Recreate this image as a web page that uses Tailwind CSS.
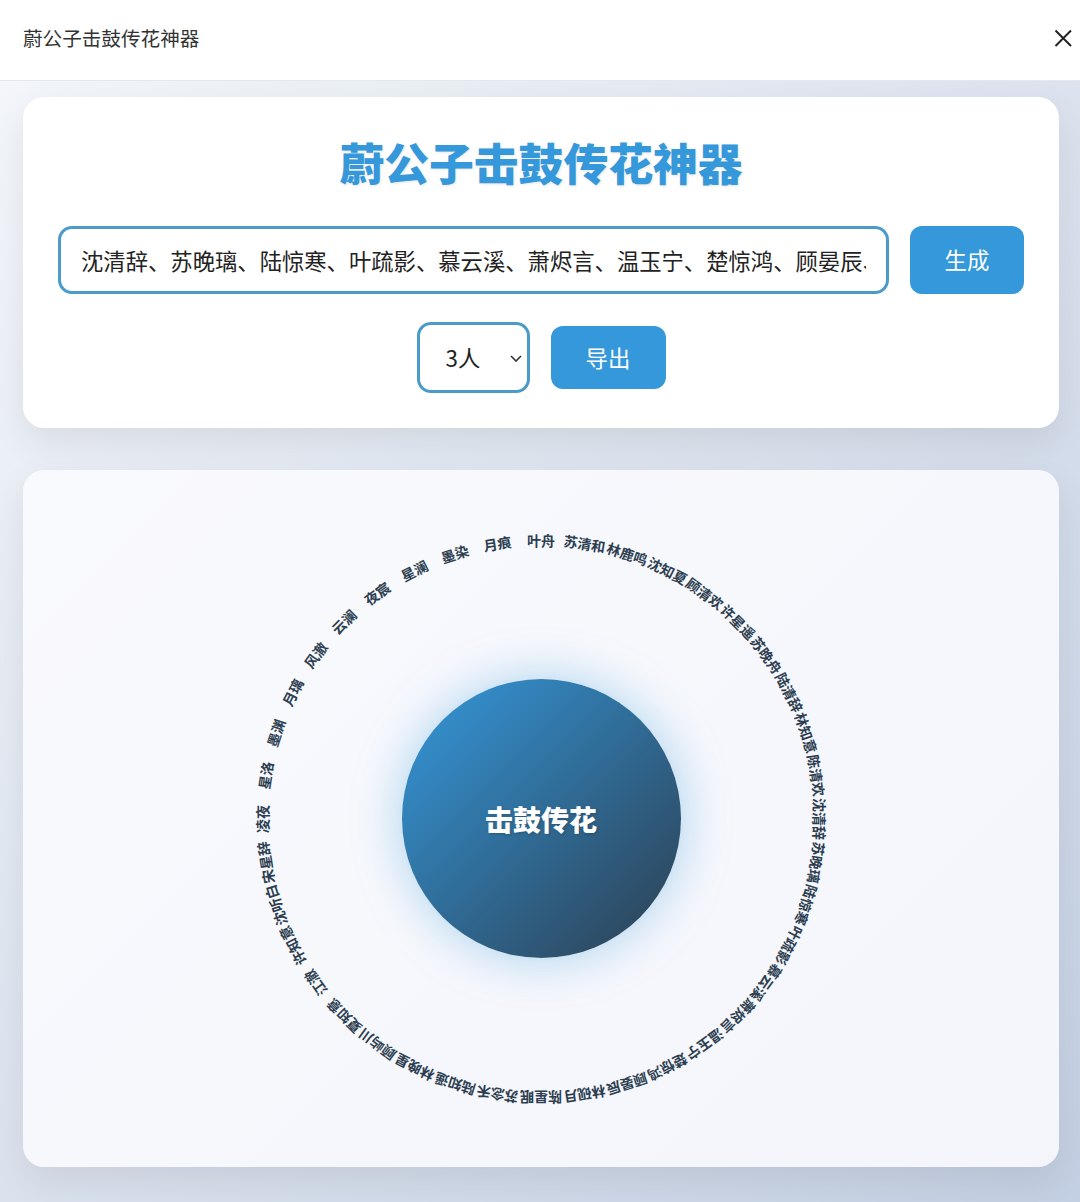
<!DOCTYPE html>
<html lang="zh-CN">
<head>
  <meta charset="UTF-8">
  <meta name="viewport" content="width=device-width, initial-scale=1.0">
  <title>蔚公子击鼓传花神器</title>
  <script src="https://cdn.jsdelivr.net/npm/@tailwindcss/browser@4"></script>
</head>
<body class="h-[1202px] overflow-hidden flex flex-col bg-linear-[135deg,#f5f7fb,#c3cfe2] text-[#333] font-['Noto_Sans_CJK_SC','Noto_Sans',sans-serif]">
  <!-- Header -->
  <header class="h-[81px] shrink-0 bg-white border-b border-[#e4e7ec] flex items-center justify-between pl-[23px] pr-[8px]">
    <h1 class="text-[19.6px] leading-none font-normal text-[#333] -mt-1">蔚公子击鼓传花神器</h1>
    <button class="w-[18px] h-[18px] -mt-1">
      <svg viewBox="0 0 18 18" class="w-[18px] h-[18px]" fill="none" stroke="#222" stroke-width="2"><path d="M1.5 1.5L17 17M17 1.5L1.5 17"/></svg>
    </button>
  </header>

  <main class="flex-1 flex flex-col gap-[42px] pl-[23px] pr-[21px] pt-[16px] pb-[35px] min-h-0">
    <!-- Controls -->
    <section class="shrink-0 h-[331px] bg-white rounded-[21px] shadow-[0_14px_36px_rgba(0,0,0,0.08)] pt-[33px] px-[35px]">
      <h2 class="h-[64px] leading-[64px] text-center text-[44.8px] font-black text-[#3498db] [text-shadow:1px_1px_3px_rgba(0,0,0,0.1)]">蔚公子击鼓传花神器</h2>
      <div class="flex gap-[21px] mt-[32px]">
        <input type="text" class="flex-1 min-w-0 h-[68px] border-[3px] border-[#4a9bc9] rounded-[14px] px-[20px] text-[22.34px] text-[#222] outline-none bg-white" value="沈清辞、苏晚璃、陆惊寒、叶疏影、慕云溪、萧烬言、温玉宁、楚惊鸿、顾晏辰、林砚月、陈星眠、苏念禾">
        <button class="w-[114px] h-[68px] bg-[#3498db] text-white text-[22.4px] rounded-[12px]">生成</button>
      </div>
      <div class="flex items-center justify-center gap-[21px] mt-[28px]">
        <div class="relative w-[113px] h-[71px]">
          <select class="appearance-none w-full h-full border-[3px] border-[#4a9bc9] rounded-[14px] pl-[26px] text-[22.4px] text-[#222] bg-white outline-none">
            <option>3人</option>
          </select>
          <svg viewBox="0 0 12 7" class="absolute right-[8px] top-[33px] w-[12px] h-[7px]" fill="none" stroke="#333" stroke-width="1.6"><path d="M1 1L6 6L11 1"/></svg>
        </div>
        <button class="w-[115px] h-[63px] bg-[#3498db] text-white text-[22.4px] rounded-[12px]">导出</button>
      </div>
    </section>

    <!-- Drum ring -->
    <section class="flex-1 bg-[#fcfcff]/85 rounded-[21px] shadow-[0_14px_36px_rgba(0,0,0,0.08)] flex items-center justify-center">
      <div id="ring" class="relative w-[279px] h-[279px] rounded-full bg-linear-[135deg,#3498db,#2c3e50] shadow-[0_0_50px_rgba(52,152,219,0.4)] flex items-center justify-center">
        <span class="text-white text-[28px] font-black leading-none mt-[1px] [text-shadow:1px_1px_3px_rgba(0,0,0,0.2)]">击鼓传花</span>
      </div>
    </section>
  </main>

  <script>
  const names = ['叶舟','苏清和','林鹿鸣','沈知夏','顾清欢','许星遥','苏晚舟','陆清辞','林知意','陈清欢','沈清辞','苏晚璃','陆惊寒','叶疏影','慕云溪','萧烬言','温玉宁','楚惊鸿','顾晏辰','林砚月','陈星眠','苏念禾','陆知遥','林晚星','顾屿川','夏知意','江澈','许知意','沈听白','宋星辞','凌夜','星洛','墨渊','月璃','风澈','云澜','夜宸','星澜','墨染','月痕'];
  const ring = document.getElementById('ring');

  names.forEach((name, index) => {
    const item = document.createElement('span');
    item.className = 'absolute left-1/2 top-1/2 whitespace-nowrap text-[14px] leading-none font-bold text-[#2c3e50]';
    item.style.transform = `translate(-50%, -50%) rotate(${index * 9}deg) translateY(-279px)`;
    item.textContent = name;
    ring.appendChild(item);
  });
  </script>
</body>
</html>
